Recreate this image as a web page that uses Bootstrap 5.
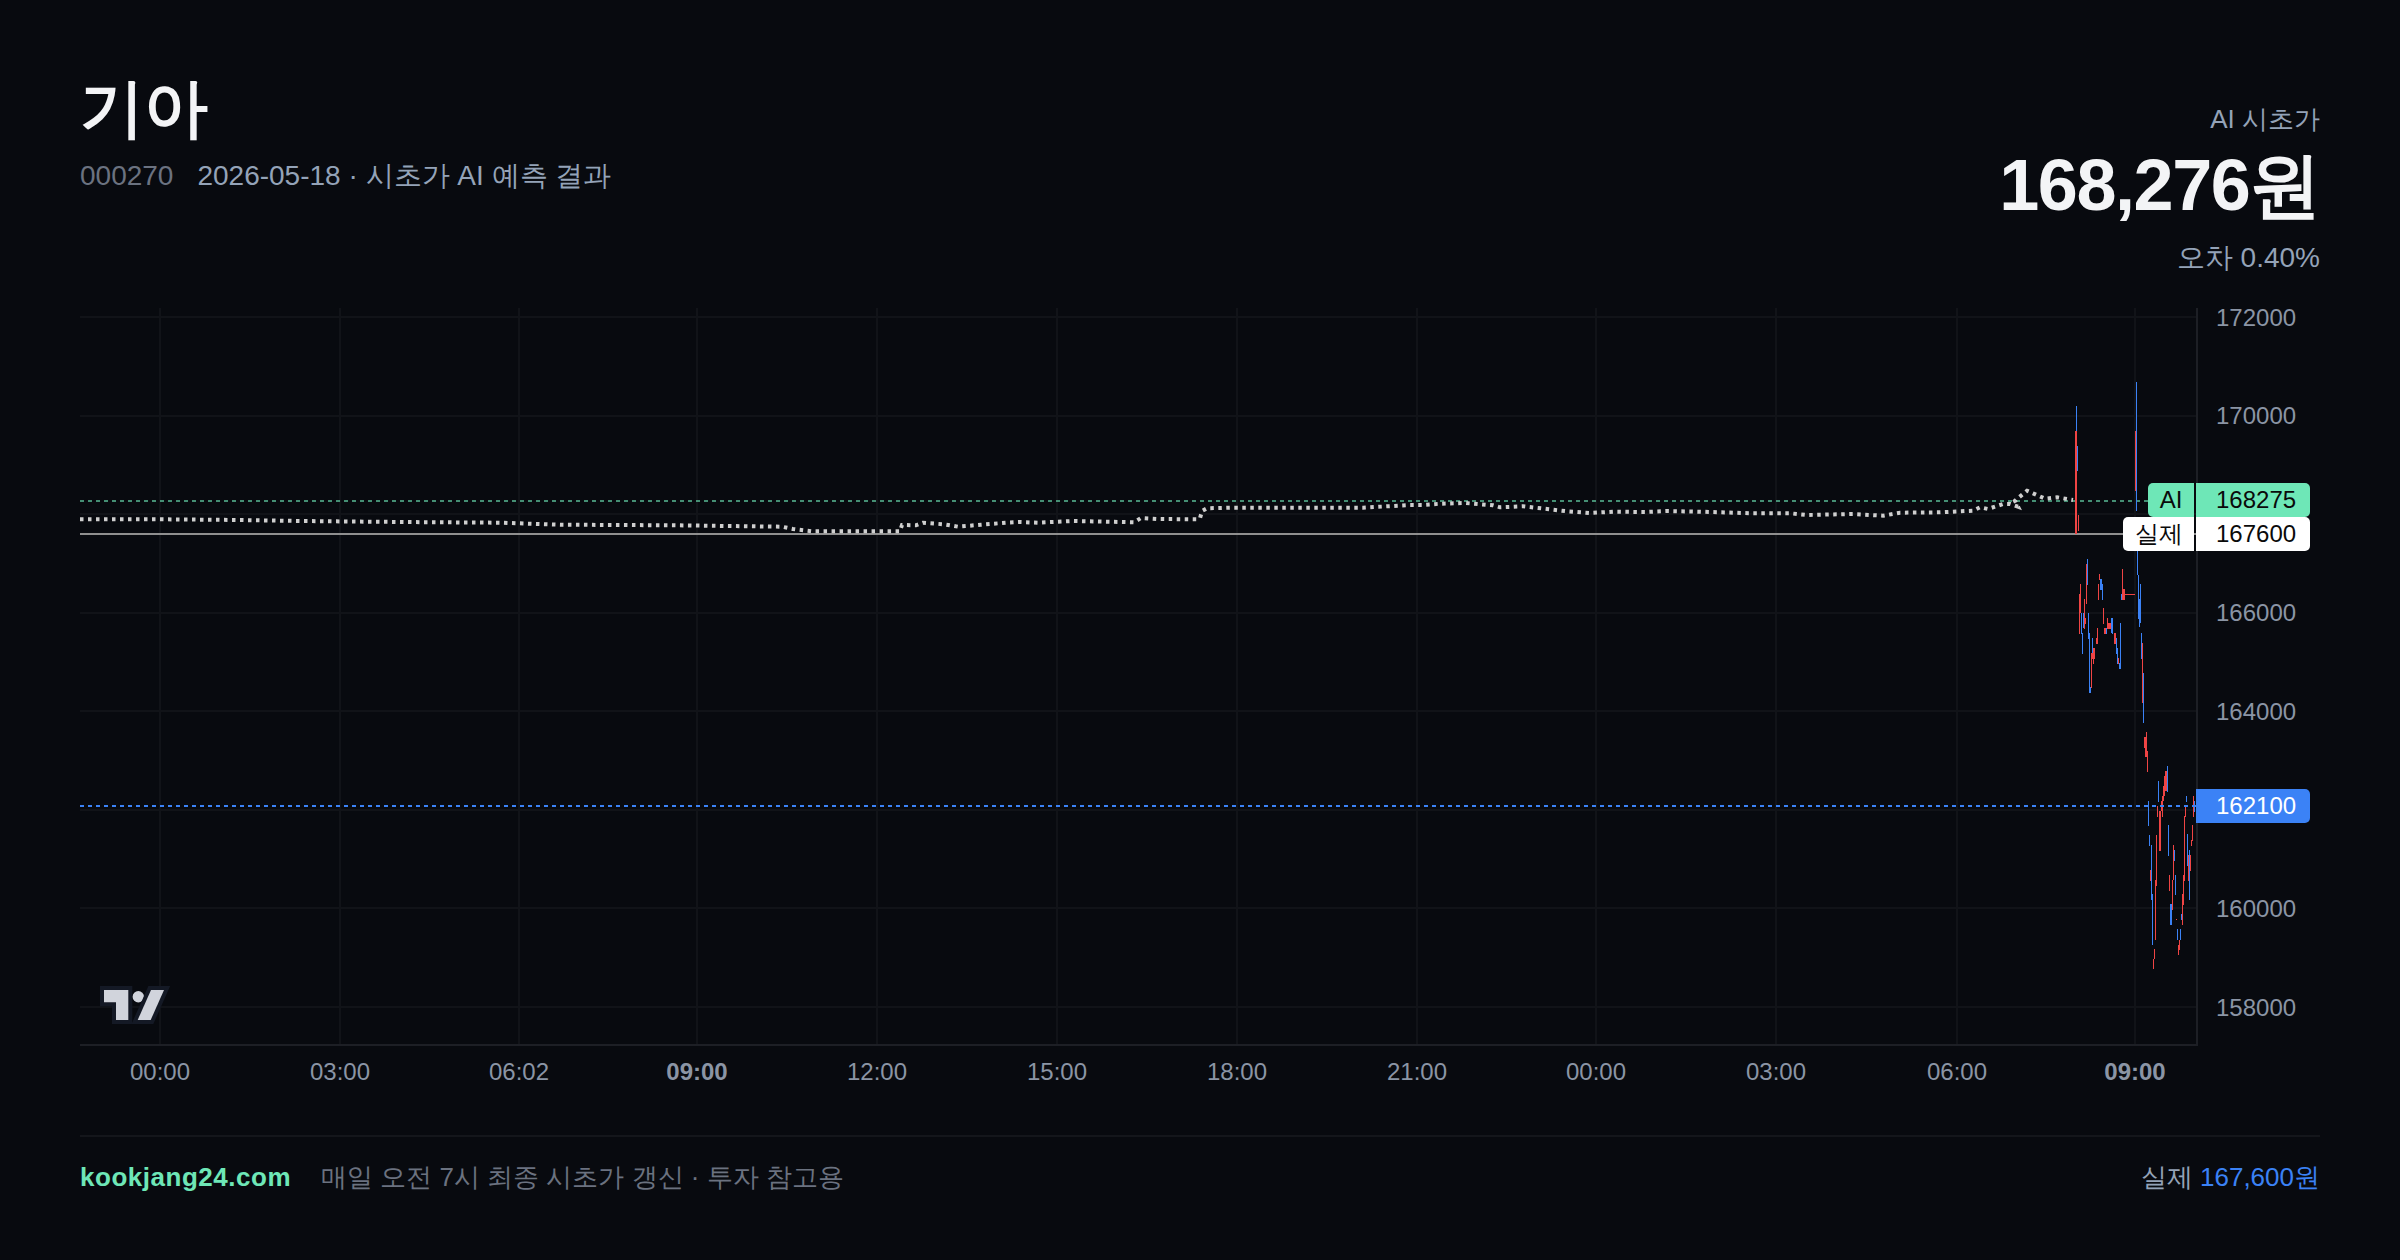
<!DOCTYPE html>
<html lang="ko">
<head>
    <meta charset="UTF-8">
    <meta name="viewport" content="width=device-width, initial-scale=1.0">
    <title>기아 시초가 AI 예측 결과</title>
    <link href="https://cdn.jsdelivr.net/npm/bootstrap@5.3.0/dist/css/bootstrap.min.css" rel="stylesheet">
    <style>
        html, body {
            height: 100%;
        }
        body {
            background-color: #080a0f;
            color: #f3f4f6;
            font-family: "Liberation Sans", sans-serif;
            overflow: hidden;
        }
        .page {
            width: 2400px;
            height: 1260px;
            padding: 70px 80px 0;
        }
        .head {
            height: 238px;
        }
        .stock-name {
            font-size: 64px;
            font-weight: 700;
            line-height: 1.2;
            margin: 0 0 12px;
        }
        .sub {
            font-size: 28px;
            line-height: 1.2;
            color: #94a3b8;
        }
        .sub .code {
            color: #6b7280;
            margin-right: 24px;
        }
        .ai-label {
            font-size: 26px;
            line-height: 1.2;
            color: #94a3b8;
            margin-top: 34px;
        }
        .ai-price {
            font-size: 72px;
            font-weight: 700;
            line-height: 1.2;
            letter-spacing: -0.02em;
            margin-top: 7px;
        }
        .ai-error {
            font-size: 28px;
            line-height: 1.2;
            color: #94a3b8;
            margin-top: 12px;
        }
        .chart {
            width: 2240px;
            height: 782px;
            font-size: 24px;
            line-height: 28px;
            color: #8b95a5;
        }
        .plot {
            display: block;
        }
        .axis-label {
            position: absolute;
            white-space: nowrap;
            transform: translateY(-50%);
        }
        .time-label {
            position: absolute;
            top: 764px;
            white-space: nowrap;
            transform: translate(-50%, -50%);
        }
        .tag {
            position: absolute;
            right: 10px;
            height: 34px;
            gap: 2px;
            line-height: 34px;
        }
        .tag-title {
            padding: 0 11.5px;
            border-radius: 5px 0 0 5px;
            text-align: center;
        }
        .tag-value {
            width: 114px;
            padding-left: 20px;
        }
        .tag-last {
            border-radius: 0 5px 5px 0;
        }
        .tag-ai > span {
            background-color: #6ee7b7;
            color: #0a0a0a;
        }
        .tag-real > span {
            background-color: #ffffff;
            color: #0a0a0a;
        }
        .tag-cur > span {
            background-color: #3b82f6;
            color: #ffffff;
        }
        .foot {
            margin-top: 45px;
            padding-top: 22px;
            border-top: 2px solid #14161b;
            font-size: 26px;
            line-height: 36px;
            color: #6b7280;
        }
        .brand {
            color: #6ee7b7;
            font-weight: 700;
            letter-spacing: 0.02em;
            margin-right: 30px;
        }
        .real-price {
            color: #94a3b8;
        }
        .real-price span {
            color: #3b82f6;
        }
    </style>
</head>
<body>
    <div class="page d-flex flex-column">
        <div class="head d-flex justify-content-between align-items-start">
            <div>
                <h1 class="stock-name">기아</h1>
                <div class="sub"><span class="code">000270</span>2026-05-18 · 시초가 AI 예측 결과</div>
            </div>
            <div class="text-end">
                <div class="ai-label">AI 시초가</div>
                <div class="ai-price">168,276원</div>
                <div class="ai-error">오차 0.40%</div>
            </div>
        </div>

        <div class="chart position-relative" id="chart">
            <svg class="plot" id="plot" width="2240" height="760" viewBox="80 308 2240 760" shape-rendering="crispEdges"></svg>
            <div class="tag tag-ai d-flex" style="top:175px"><span class="tag-title">AI</span><span class="tag-value tag-last">168275</span></div>
            <div class="tag tag-real d-flex" style="top:209px"><span class="tag-title">실제</span><span class="tag-value tag-last">167600</span></div>
            <div class="tag tag-cur d-flex" style="top:481px"><span class="tag-value tag-last">162100</span></div>
        </div>

        <div class="foot d-flex justify-content-between">
            <div><span class="brand">kookjang24.com</span>매일 오전 7시 최종 시초가 갱신 · 투자 참고용</div>
            <div class="real-price">실제 <span>167,600원</span></div>
        </div>
    </div>

    <script src="https://cdn.jsdelivr.net/npm/bootstrap@5.3.0/dist/js/bootstrap.bundle.min.js"></script>
    <script>
        const RED = '#ef4444', BLUE = '#3b82f6';

        // [x, y1, y2, width, color] in page pixels
        const candles = [
            [2076,406,431,1,BLUE],[2075,431,534,2,RED],[2077,446,471,1,BLUE],[2078,515,531,1,RED],
            [2136,382,511,1,BLUE],[2135,431,491,1,RED],[2137,551,575,1,BLUE],
            [2079,594,634,1,RED],[2079,594,613,2,RED],[2080,584,613,1,RED],[2081,613,634,1,BLUE],[2082,633,654,1,BLUE],
            [2083,613,628,1,BLUE],[2084,599,629,1,RED],[2084,618,624,2,RED],[2086,564,604,1,RED],[2087,559,585,1,BLUE],
            [2088,613,639,1,BLUE],[2088,633,639,2,BLUE],[2089,633,693,1,BLUE],[2089,687,693,2,BLUE],[2091,653,688,1,RED],
            [2092,638,659,1,BLUE],[2091,653,659,4,RED],[2093,648,664,1,RED],[2094,648,659,1,RED],[2096,638,644,2,RED],
            [2097,628,639,1,RED],[2098,584,600,1,RED],[2099,574,580,1,RED],[2100,579,590,2,BLUE],[2102,584,600,1,BLUE],
            [2103,608,624,1,RED],[2104,628,634,2,RED],[2106,628,634,1,BLUE],[2107,618,628,1,RED],[2107,623,629,4,RED],
            [2111,618,633,1,BLUE],[2112,618,634,1,BLUE],[2114,633,644,2,RED],[2116,638,654,1,BLUE],[2117,648,664,1,BLUE],
            [2118,658,664,1,RED],[2119,663,669,2,BLUE],[2120,623,669,1,BLUE],[2121,594,600,1,BLUE],[2122,569,600,1,RED],
            [2122,589,600,3,RED],[2137,560,575,1,BLUE],[2138,575,619,1,BLUE],[2140,584,623,1,BLUE],
            [2138,599,619,3,BLUE],[2139,619,627,1,BLUE],[2141,633,659,1,BLUE],[2142,643,703,1,RED],[2143,673,723,1,BLUE],
            [2146,732,757,1,RED],[2144,737,748,3,RED],[2145,748,757,2,RED],[2147,751,772,1,RED],
            [2148,801,826,1,BLUE],[2149,835,846,1,BLUE],[2150,870,881,1,RED],[2151,845,900,1,BLUE],[2152,894,945,1,BLUE],
            [2153,959,969,1,RED],[2154,949,959,1,RED],[2155,880,940,1,RED],[2155,880,886,2,RED],[2156,835,885,1,RED],
            [2157,806,817,1,RED],[2158,781,802,1,BLUE],[2159,811,851,2,RED],[2161,801,811,1,RED],[2162,796,817,1,RED],
            [2163,786,801,1,RED],[2164,776,796,1,RED],[2165,771,791,2,RED],[2167,766,792,1,BLUE],[2168,825,856,1,BLUE],
            [2169,875,891,1,RED],[2170,904,925,2,BLUE],[2172,880,910,1,RED],[2173,845,880,1,RED],[2174,850,861,1,BLUE],
            [2175,875,895,1,BLUE],[2176,919,920,1,RED],[2177,929,940,1,BLUE],[2178,945,955,1,RED],[2179,940,950,1,RED],
            [2180,929,940,1,BLUE],[2181,914,920,1,BLUE],[2182,894,925,1,RED],[2183,875,905,1,RED],[2184,816,881,1,RED],
            [2185,806,817,1,RED],[2186,796,802,1,BLUE],[2187,834,866,1,BLUE],[2188,855,871,3,RED],[2188,855,881,1,RED],
            [2189,850,900,1,BLUE],[2191,840,846,1,RED],[2192,825,841,1,RED],[2193,796,817,1,RED],[2194,801,812,1,BLUE]
        ];

        // AI 예측선 (page pixels)
        const aiLine = [
            [80,519.3],[160,519.3],[240,520],[300,521],[400,522],[500,522.7],[560,524.7],[675,525.3],[782,526.7],[793,529],
            [812,531.3],[900,531.3],[902,525],[916,525.3],[923,522.7],[944,524.3],[958,526.7],[981,524.7],[1006,522.7],
            [1019,522],[1038,522.7],[1073,521],[1134,522.3],[1141,518],[1157,519],[1197,519.3],[1200,518.3],[1202,511],
            [1207,508.3],[1230,507.7],[1363,507.7],[1410,505],[1423,505],[1440,503.7],[1465,503],[1493,505.3],[1500,507.3],
            [1523,506.3],[1547,509],[1567,511.3],[1590,513],[1613,511.7],[1645,512],[1667,511],[1700,511.7],[1720,512.3],
            [1753,513.3],[1790,513.3],[1807,515],[1853,514],[1883,515.7],[1900,512.7],[1940,512.3],[1973,510.7],[1980,507.3],
            [1988,509],[2003,504],[2010,504],[2018,506.7],[2015,500.7],[2027,490.7],[2033,493.3],[2045,498.7],[2057,497.3],[2073,500]
        ];

        const priceY = p => 317 + (172000 - p) * 0.04929;
        const gridX = [160,340,519,697,877,1057,1237,1417,1596,1776,1957,2135];
        const timeLabels = ['00:00','03:00','06:02','09:00','12:00','15:00','18:00','21:00','00:00','03:00','06:00','09:00'];
        const grid = '#111318', axis = '#1d1f25';

        let svg = '';
        [172000,170000,168000,166000,164000,162000,160000,158000].forEach(p => {
            svg += `<rect x="80" y="${Math.round(priceY(p)) - 1}" width="2117" height="2" fill="${grid}"/>`;
        });
        gridX.forEach(x => {
            svg += `<rect x="${x - 1}" y="308" width="2" height="737" fill="${grid}"/>`;
        });
        svg += `<rect x="2196" y="308" width="2" height="738" fill="${axis}"/>`;
        svg += `<rect x="80" y="1044" width="2118" height="2" fill="${axis}"/>`;

        // 기준선
        svg += `<line x1="80" x2="2148" y1="501" y2="501" stroke="#6ee7b7" stroke-opacity="0.6" stroke-width="2" stroke-dasharray="4 4"/>`;
        svg += `<rect x="80" y="533" width="2117" height="2" fill="#8f8f8f"/>`;

        candles.forEach(c => {
            svg += `<rect x="${c[0]}" y="${c[1]}" width="${c[3]}" height="${c[2] - c[1]}" fill="${c[4]}"/>`;
        });
        svg += `<rect x="2124" y="594" width="11" height="1" fill="${RED}"/>`;
        svg += `<line x1="80" x2="2196" y1="806" y2="806" stroke="${BLUE}" stroke-width="2" stroke-dasharray="4 4"/>`;

        svg += `<polyline points="${aiLine.map(p => p.join(',')).join(' ')}" fill="none" stroke="#cfcfcf" stroke-width="4" stroke-dasharray="3.5 4.5" shape-rendering="auto"/>`;

        // 차트 로고
        svg += `<g shape-rendering="auto" fill="#d1d4dc" stroke="#141925" stroke-width="8" paint-order="stroke" stroke-linejoin="miter">
            <path d="M104 990H128.3V1020H116V1002.3H104Z"/>
            <circle cx="138.3" cy="996.7" r="5.7" stroke="none"/>
            <path d="M151 990H164L150.7 1020H137.7Z"/>
        </g>`;
        document.getElementById('plot').innerHTML = svg;

        const chart = document.getElementById('chart');
        [172000,170000,166000,164000,160000,158000].forEach(p => {
            chart.insertAdjacentHTML('beforeend',
                `<span class="axis-label" style="left:${2216 - 80}px;top:${priceY(p) - 307.5}px">${p}</span>`);
        });
        timeLabels.forEach((t, i) => {
            const bold = t === '09:00' ? ' fw-bold' : '';
            chart.insertAdjacentHTML('beforeend',
                `<span class="time-label${bold}" style="left:${gridX[i] - 80}px">${t}</span>`);
        });
    </script>
</body>
</html>
